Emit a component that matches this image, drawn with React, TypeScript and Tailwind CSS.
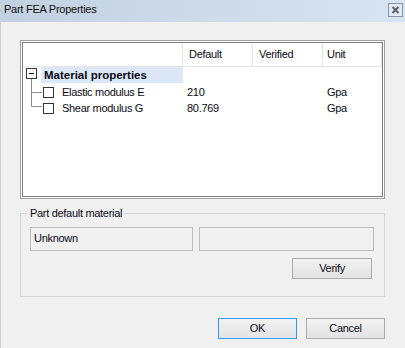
function CloseIcon() {
  return (
    <svg width="15" height="14" viewBox="0 0 15 14">
      <rect x="0.5" y="0.5" width="14" height="13" fill="#e2eaf3" stroke="#8795a7" />
      <path d="M4.5 4 L10.5 10 M10.5 4 L4.5 10" stroke="#56626f" strokeWidth="2" />
    </svg>
  )
}

function TreeLines() {
  return (
    <svg className="pointer-events-none absolute left-0 top-0 z-10" width="24" height="48" viewBox="0 0 24 48">
      <path d="M8.5 12 V39.5 M8.5 25.5 H19 M8.5 39.5 H19" stroke="#8c8c8c" fill="none" />
    </svg>
  )
}

const rows = [
  { name: 'Elastic modulus E', value: '210', unit: 'Gpa' },
  { name: 'Shear modulus G', value: '80.769', unit: 'Gpa' },
]

export default function App() {
  return (
    <div className="flex h-[348px] w-[405px] flex-col overflow-hidden bg-[#f0f0f0] font-['Liberation_Sans',Arial,sans-serif] text-[11px] tracking-[-0.3px] text-[#0a0a14]">
      <div className="flex h-[22px] shrink-0 items-start justify-between bg-gradient-to-r from-[#c2d1e1] to-[#d7e4f1] pl-[4px] pr-[2px]">
        <span className="pt-[3px] leading-[13px] tracking-[-0.25px] text-[#111]">Part FEA Properties</span>
        <span className="pt-[3px]">
          <CloseIcon />
        </span>
      </div>

      <div className="flex flex-1 flex-col border-l border-[#cfcfcf] pl-[19px] pt-[18px]">
        <div className="flex h-[159px] w-[365px] flex-col border border-[#a0a0a0] bg-white p-px">
          <div className="flex flex-1 flex-col border border-[#7f7f7f] bg-white">
            <div className="grid h-[24px] grid-cols-[160px_70px_70px_1fr] border-b border-[#e5e5e5] leading-[23px]">
              <div className="border-r border-[#e5e5e5]" />
              <div className="border-r border-[#e5e5e5] pl-[6px]">Default</div>
              <div className="border-r border-[#e5e5e5] pl-[6px]">Verified</div>
              <div className="border-r border-[#e5e5e5] pl-[4px]">Unit</div>
            </div>

            <div className="relative">
              <TreeLines />
              <div className="flex h-[17px] w-[160px] items-start">
                <span className="ml-[3px] mt-[1px] flex h-[11px] w-[11px] items-center justify-center border border-[#333]">
                  <span className="h-px w-[5px] bg-black" />
                </span>
                <span className="ml-[4px] h-[16px] flex-1 bg-[#dce7f7] pl-[3px] text-[11.5px] font-bold leading-[16px] tracking-normal">
                  Material properties
                </span>
              </div>
              {rows.map((r) => (
                <div key={r.name} className="grid h-[16px] grid-cols-[160px_70px_70px_1fr] leading-[16px]">
                  <div className="flex items-center pl-[20px]">
                    <span className="h-[11px] w-[11px] border border-[#333] bg-white" />
                    <span className="ml-[8px]">{r.name}</span>
                  </div>
                  <div className="pl-[4px]">{r.value}</div>
                  <div />
                  <div className="pl-[4px]">{r.unit}</div>
                </div>
              ))}
            </div>
          </div>
        </div>

        <fieldset className="mt-[8px] w-[365px] border border-[#d5d5d5] px-[7px] pb-[17px] pt-[7px]">
          <legend className="px-[2px] leading-[13px]">Part default material</legend>
          <div className="ml-[2px] flex w-[344px] flex-col">
            <div className="flex gap-[6px]">
              <div className="h-[24px] w-[163px] border border-[#bcbcbc] pl-[3px] leading-[21px]">Unknown</div>
              <div className="h-[24px] w-[175px] border border-[#bcbcbc]" />
            </div>
            <button className="mr-[2px] mt-[7px] h-[21px] w-[80px] self-end border border-[#adadad] bg-gradient-to-b from-[#f2f2f2] to-[#e3e3e3] leading-[19px]">
              Verify
            </button>
          </div>
        </fieldset>

        <div className="mt-[21px] flex w-[365px] justify-end gap-[9px]">
          <button className="h-[21px] w-[79px] border border-[#3399ff] bg-gradient-to-b from-[#f2f2f2] to-[#e3e3e3] leading-[19px]">
            OK
          </button>
          <button className="h-[21px] w-[79px] border border-[#adadad] bg-gradient-to-b from-[#f2f2f2] to-[#e3e3e3] leading-[19px]">
            Cancel
          </button>
        </div>
      </div>
    </div>
  )
}
